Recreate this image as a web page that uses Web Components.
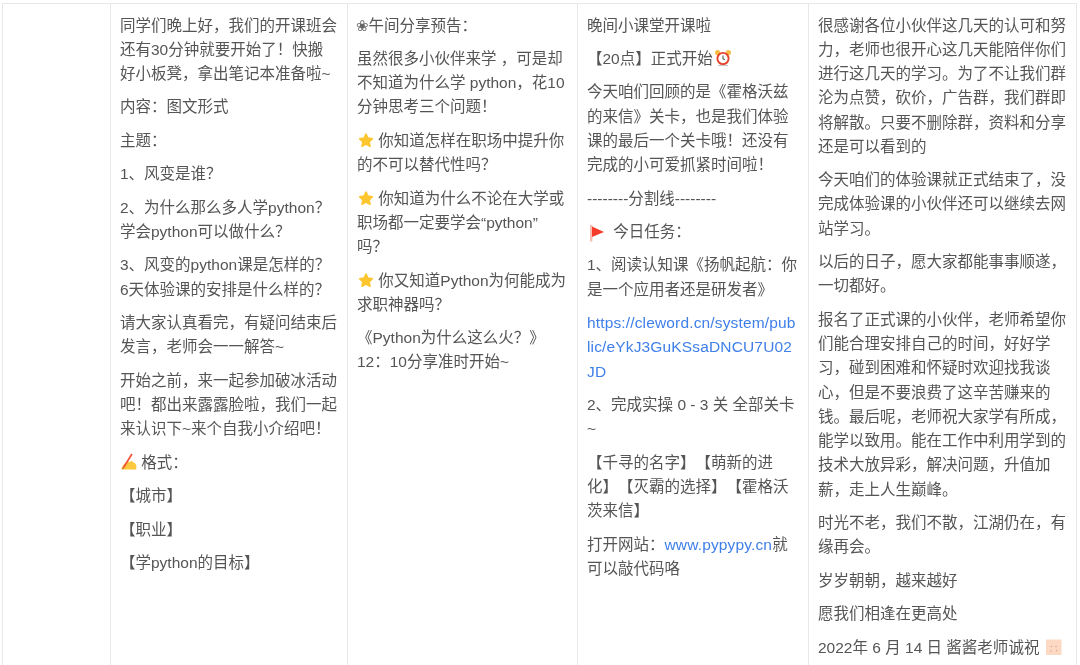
<!DOCTYPE html>
<html lang="zh">
<head>
<meta charset="utf-8">
<title>课程通知</title>
<style>
  html, body { margin: 0; height: 100%; background: #fff; overflow: hidden; }
</style>
</head>
<body>
<notice-table>
  <notice-cell></notice-cell>
  <notice-cell>
    <p>同学们晚上好，我们的开课班会还有30分钟就要开始了！快搬好小板凳，拿出笔记本准备啦~</p>
    <p>内容：图文形式</p>
    <p>主题：</p>
    <p>1、风变是谁？</p>
    <p>2、为什么那么多人学python？学会python可以做什么？</p>
    <p>3、风变的python课是怎样的？6天体验课的安排是什么样的？</p>
    <p>请大家认真看完，有疑问结束后发言，老师会一一解答~</p>
    <p>开始之前，来一起参加破冰活动吧！都出来露露脸啦，我们一起来认识下~来个自我小介绍吧！</p>
    <p><notice-icon name="write"></notice-icon> 格式：</p>
    <p>【城市】</p>
    <p>【职业】</p>
    <p>【学python的目标】</p>
  </notice-cell>
  <notice-cell>
    <p><span style="font-family:'DejaVu Sans',sans-serif;font-size:15px;margin-left:-1px;color:#666">❀</span>午间分享预告：</p>
    <p>虽然很多小伙伴来学 ，可是却不知道为什么学 python，花10分钟思考三个问题！</p>
    <p><notice-icon name="star"></notice-icon> 你知道怎样在职场中提升你的不可以替代性吗？</p>
    <p><notice-icon name="star"></notice-icon> 你知道为什么不论在大学或职场都一定要学会“python” 吗？</p>
    <p><notice-icon name="star"></notice-icon> 你又知道Python为何能成为求职神器吗？</p>
    <p>《Python为什么这么火？》<br>12：10分享准时开始~</p>
  </notice-cell>
  <notice-cell>
    <p>晚间小课堂开课啦</p>
    <p>【20点】正式开始<notice-icon name="clock"></notice-icon></p>
    <p>今天咱们回顾的是《霍格沃兹的来信》关卡，也是我们体验课的最后一个关卡哦！还没有完成的小可爱抓紧时间啦！</p>
    <p>--------分割线--------</p>
    <p><notice-icon name="flag"></notice-icon> 今日任务：</p>
    <p>1、阅读认知课《扬帆起航：你是一个应用者还是研发者》</p>
    <p><a href="#">https://cleword.cn/system/public/eYkJ3GuKSsaDNCU7U02JD</a></p>
    <p>2、完成实操 0 - 3 关 全部关卡 ~</p>
    <p>【千寻的名字】【萌新的进化】【灭霸的选择】【霍格沃茨来信】</p>
    <p>打开网站：<a href="#">www.pypypy.cn</a>就<br>可以敲代码咯</p>
  </notice-cell>
  <notice-cell>
    <p>很感谢各位小伙伴这几天的认可和努力，老师也很开心这几天能陪伴你们进行这几天的学习。为了不让我们群沦为点赞，砍价，广告群，我们群即将解散。只要不删除群，资料和分享还是可以看到的</p>
    <p>今天咱们的体验课就正式结束了，没完成体验课的小伙伴还可以继续去网站学习。</p>
    <p>以后的日子，愿大家都能事事顺遂，一切都好。</p>
    <p>报名了正式课的小伙伴，老师希望你们能合理安排自己的时间，好好学习，碰到困难和怀疑时欢迎找我谈心，但是不要浪费了这辛苦赚来的钱。最后呢，老师祝大家学有所成，能学以致用。能在工作中利用学到的技术大放异彩，解决问题，升值加薪，走上人生巅峰。</p>
    <p>时光不老，我们不散，江湖仍在，有缘再会。</p>
    <p>岁岁朝朝，越来越好</p>
    <p>愿我们相逢在更高处</p>
    <p>2022年 6 月 14 日 酱酱老师诚祝 <notice-icon name="blush"></notice-icon></p>
  </notice-cell>
</notice-table>

<script>
const tableTemplate = document.createElement('template');
tableTemplate.innerHTML = `
  <style>
    :host {
      display: grid;
      grid-template-columns: 108px 237px 230px 231px 269px;
      height: 661px;
      margin: 3px 0 0 2px;
      border-top: 1px solid #e8e8e8;
      width: 1075px;
      font-family: "Liberation Sans", "Noto Sans CJK SC", sans-serif;
      font-size: 15.5px;
      line-height: 24.25px;
      color: #555;
      text-spacing-trim: space-all;
      filter: blur(.3px);
    }
  </style>
  <slot></slot>
`;

class NoticeTable extends HTMLElement {
  constructor() {
    super();
    this.attachShadow({mode:'open'}).appendChild(tableTemplate.content.cloneNode(true));
  }
}

const cellTemplate = document.createElement('template');
cellTemplate.innerHTML = `
  <style>
    :host {
      display: block;
      box-sizing: border-box;
      padding: 9.5px 10px 0 9px;
      border-left: 1px solid #e8e8e8;
      word-break: break-all;
    }
    :host(:last-child) { border-right: 1px solid #e8e8e8; }
    ::slotted(p) { margin: 0 0 9.2px; }
    ::slotted(p:last-child) { margin-bottom: 0; }
  </style>
  <slot></slot>
`;

class NoticeCell extends HTMLElement {
  constructor() {
    super();
    this.attachShadow({mode:'open'}).appendChild(cellTemplate.content.cloneNode(true));
  }
}

// small emoji, drawn by hand. css is what the glyph takes in the line
const icons = {
  star: {
    css: 'margin-right:-1px',
    svg: `<path d="M9 3l1.9 4.1 4.5.6-3.3 3.1.9 4.5L9 13l-4 2.3.9-4.5-3.3-3.1 4.5-.6z" fill="#fdc62f" stroke="#fdc62f" stroke-width="1.6" stroke-linejoin="round"/>`
  },
  write: {
    css: 'margin-right:-1px',
    svg: `<path d="M1.5 16.5c.3-3 3-6.5 5.5-8l2.5.6 2.2-1 3.5 2.4c1.5 2 1.5 4.2.8 6z" fill="#fcc83d"/><path d="M3.5 14.5L12 1" stroke="#f2503a" stroke-width="1.7" fill="none"/><path d="M2.5 16l1-1.5" stroke="#b5483a" stroke-width="1.2"/>`
  },
  clock: {
    css: 'margin-left:1px',
    svg: `<circle cx="3.6" cy="3.6" r="2.6" fill="#f6bd45"/><circle cx="14.4" cy="3.6" r="2.6" fill="#f6bd45"/><path d="M4 16.5h10" stroke="#c9c9c9" stroke-width="1.2"/><circle cx="9" cy="9.5" r="5.6" fill="#fff" stroke="#e5432d" stroke-width="1.9"/><path d="M9 6.5v3.2l2 1.2" stroke="#555" stroke-width="1.1" fill="none"/>`
  },
  flag: {
    css: 'margin-right:4px;vertical-align:-5px',
    svg: `<path d="M4.2 1v16.5" stroke="#f6bdb0" stroke-width="2.4"/><path d="M5 2.5L17 8 5 13z" fill="#f53c2a"/>`
  },
  blush: {
    css: 'margin-left:1.5px',
    svg: `<rect x="1" y="1.5" width="15.5" height="15.5" fill="#fdd9c4"/><g fill="#d99a86"><circle cx="6.5" cy="8.5" r=".7"/><circle cx="11" cy="8.5" r=".7"/><circle cx="6" cy="13" r=".7"/><circle cx="11.5" cy="12.5" r=".7"/></g>`
  }
};

class NoticeIcon extends HTMLElement {
  constructor() {
    super();
    const icon = icons[this.getAttribute('name')];
    this.attachShadow({mode:'open'}).innerHTML = `
      <style>
        :host { display: inline-block; width: 18px; height: 18px; vertical-align: -3px; ${icon.css} }
        svg { display: block; }
      </style>
      <svg width="18" height="18" viewBox="0 0 18 18">${icon.svg}</svg>
    `;
  }
}

customElements.define('notice-table', NoticeTable);
customElements.define('notice-cell', NoticeCell);
customElements.define('notice-icon', NoticeIcon);

// the links are light DOM inside a <p>, ::slotted can't reach them
document.querySelectorAll('notice-cell a').forEach(a => {
  a.style.color = '#3f7fe8';
  a.style.textDecoration = 'none';
  a.style.letterSpacing = '.15px';
});
</script>
</body>
</html>
